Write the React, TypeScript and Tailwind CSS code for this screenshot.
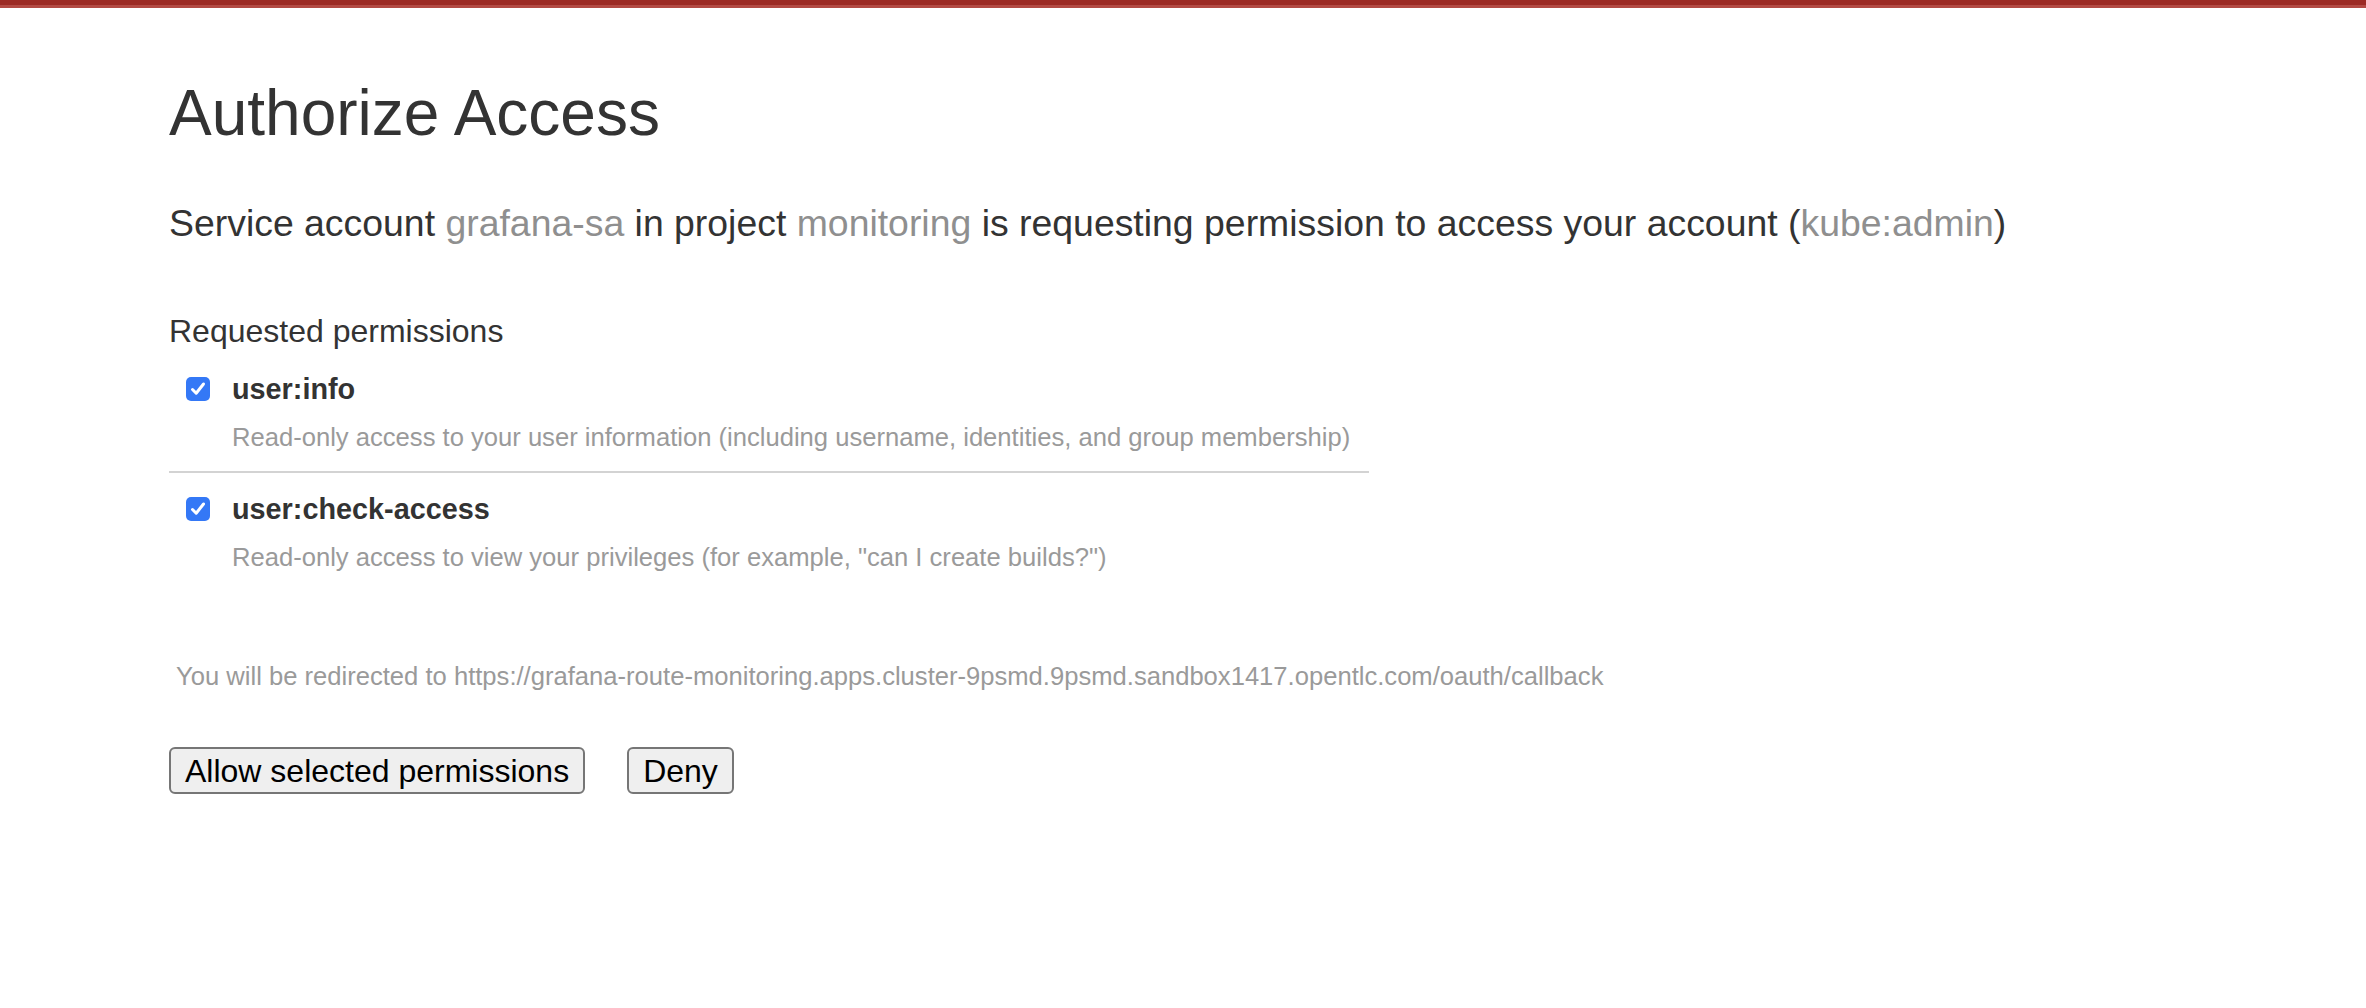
import React from "react";

function Check() {
  return (
    <div className="w-[24px] h-[24px] rounded-[5px] bg-[#3478f6] flex items-center justify-center shrink-0">
      <svg width="20" height="20" viewBox="0 0 20 20" fill="none">
        <path d="M4.5 10.5 L8.2 14.2 L15.5 5" stroke="white" strokeWidth="3" strokeLinecap="round" strokeLinejoin="round" />
      </svg>
    </div>
  );
}

export default function App() {
  const font = { fontFamily: '"Liberation Sans", Arial, Helvetica, sans-serif' };
  return (
    <div className="w-full min-h-[1008px] bg-white text-[#333333]" style={font}>
      <div className="h-[8px] bg-[#9c2a24] border-b-[3px] border-[#b34a44]" />
      <div className="pl-[169px]">
        <h1 className="mt-[67px] text-[64px] leading-[76px] font-normal text-[#333333]">Authorize Access</h1>
        <p className="mt-[50px] text-[37.4px] leading-[45px]">
          Service account <span className="text-[#8f8f8f]">grafana-sa</span> in project{" "}
          <span className="text-[#8f8f8f]">monitoring</span> is requesting permission to access your account (
          <span className="text-[#8f8f8f]">kube:admin</span>)
        </p>
        <div className="mt-[66px] text-[32px] leading-[38px]">Requested permissions</div>
        <div className="w-[1200px]">
          <div className="pb-[19px] border-b-2 border-[#d3d3d3]">
            <div className="mt-[22px] flex items-center h-[34px]">
              <div className="ml-[17px] mr-[22px]"><Check /></div>
              <span className="text-[28.8px] leading-[34px] font-bold text-[#333333]">user:info</span>
            </div>
            <div className="mt-[16px] ml-[63px] text-[25.6px] leading-[30px] text-[#9a9a9a]">
              Read-only access to your user information (including username, identities, and group membership)
            </div>
          </div>
          <div className="mt-[19px] flex items-center h-[34px]">
            <div className="ml-[17px] mr-[22px]"><Check /></div>
            <span className="text-[28.8px] leading-[34px] font-bold text-[#333333]">user:check-access</span>
          </div>
          <div className="mt-[16px] ml-[63px] text-[25.6px] leading-[30px] text-[#9a9a9a]">
            Read-only access to view your privileges (for example, "can I create builds?")
          </div>
        </div>
        <div className="mt-[89px] ml-[7px] text-[25.6px] leading-[30px] text-[#9a9a9a]">
          You will be redirected to https://grafana-route-monitoring.apps.cluster-9psmd.9psmd.sandbox1417.opentlc.com/oauth/callback
        </div>
        <div className="mt-[56px] flex items-center gap-[42px]">
          <button className="h-[47px] px-[14px] text-[32px] leading-[38px] text-black bg-[#efefef] border-2 border-[#767676] rounded-[6px]">
            Allow selected permissions
          </button>
          <button className="h-[47px] px-[14px] text-[32px] leading-[38px] text-black bg-[#efefef] border-2 border-[#767676] rounded-[6px]">
            Deny
          </button>
        </div>
      </div>
    </div>
  );
}
